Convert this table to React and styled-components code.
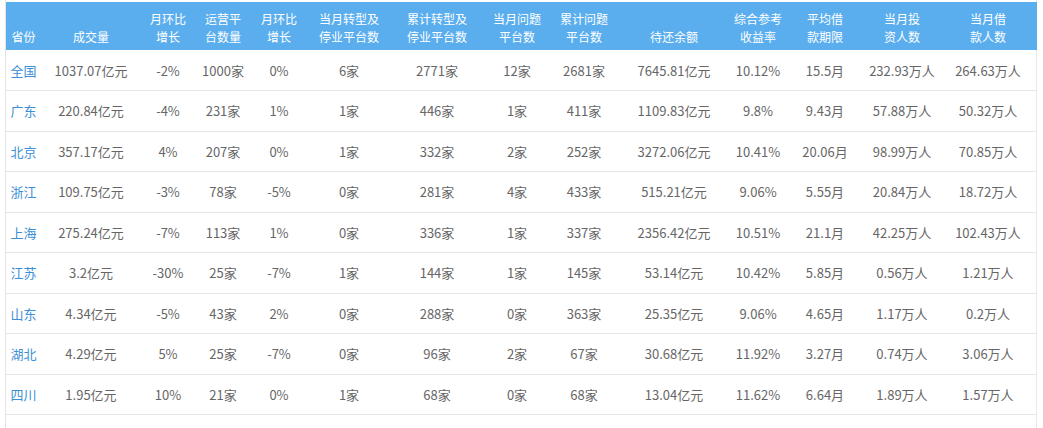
import React from 'react'
import styled, { createGlobalStyle } from 'styled-components'

// column widths, taken so that each column's text sits where the reference has it
const columns = [
    { key: 'prov', title: ['省份'], width: 35 },
    { key: 'volume', title: ['成交量'], width: 100 },
    { key: 'volRate', title: ['月环比', '增长'], width: 54 },
    { key: 'platforms', title: ['运营平', '台数量'], width: 56 },
    { key: 'platRate', title: ['月环比', '增长'], width: 56 },
    { key: 'monthStop', title: ['当月转型及', '停业平台数'], width: 84 },
    { key: 'totalStop', title: ['累计转型及', '停业平台数'], width: 92 },
    { key: 'monthProblem', title: ['当月问题', '平台数'], width: 68 },
    { key: 'totalProblem', title: ['累计问题', '平台数'], width: 66 },
    { key: 'balance', title: ['待还余额'], width: 114 },
    { key: 'yield', title: ['综合参考', '收益率'], width: 54 },
    { key: 'term', title: ['平均借', '款期限'], width: 80 },
    { key: 'investors', title: ['当月投', '资人数'], width: 74 },
    { key: 'borrowers', title: ['当月借', '款人数'], width: 98 },
]

const rows = [
    ['全国', '1037.07亿元', '-2%', '1000家', '0%', '6家', '2771家', '12家', '2681家', '7645.81亿元', '10.12%', '15.5月', '232.93万人', '264.63万人'],
    ['广东', '220.84亿元', '-4%', '231家', '1%', '1家', '446家', '1家', '411家', '1109.83亿元', '9.8%', '9.43月', '57.88万人', '50.32万人'],
    ['北京', '357.17亿元', '4%', '207家', '0%', '1家', '332家', '2家', '252家', '3272.06亿元', '10.41%', '20.06月', '98.99万人', '70.85万人'],
    ['浙江', '109.75亿元', '-3%', '78家', '-5%', '0家', '281家', '4家', '433家', '515.21亿元', '9.06%', '5.55月', '20.84万人', '18.72万人'],
    ['上海', '275.24亿元', '-7%', '113家', '1%', '0家', '336家', '1家', '337家', '2356.42亿元', '10.51%', '21.1月', '42.25万人', '102.43万人'],
    ['江苏', '3.2亿元', '-30%', '25家', '-7%', '1家', '144家', '1家', '145家', '53.14亿元', '10.42%', '5.85月', '0.56万人', '1.21万人'],
    ['山东', '4.34亿元', '-5%', '43家', '2%', '0家', '288家', '0家', '363家', '25.35亿元', '9.06%', '4.65月', '1.17万人', '0.2万人'],
    ['湖北', '4.29亿元', '5%', '25家', '-7%', '0家', '96家', '2家', '67家', '30.68亿元', '11.92%', '3.27月', '0.74万人', '3.06万人'],
    ['四川', '1.95亿元', '10%', '21家', '0%', '1家', '68家', '0家', '68家', '13.04亿元', '11.62%', '6.64月', '1.89万人', '1.57万人'],
]

function App() {
    return (
        <>
            <GlobalStyle />
            <Page>
                <Table>
                    <colgroup>
                        {columns.map(col => <col key={col.key} style={{ width: col.width }} />)}
                    </colgroup>
                    <thead>
                        <tr>
                            {columns.map(col => (
                                <HeadCell key={col.key}>
                                    {col.title.map(line => <span key={line}>{line}</span>)}
                                </HeadCell>
                            ))}
                        </tr>
                    </thead>
                    <tbody>
                        {rows.map(row => (
                            <Row key={row[0]}>
                                {row.map((value, i) => (
                                    <Cell key={columns[i].key} $link={i === 0}>{value}</Cell>
                                ))}
                            </Row>
                        ))}
                    </tbody>
                </Table>
            </Page>
        </>
    )
}

export default App

const GlobalStyle = createGlobalStyle`
    html, body {
        margin: 0;
        padding: 0;
        background: #fff;
    }
    body {
        font-family: "Noto Sans CJK SC", "Noto Sans", sans-serif;
    }
`

const Page = styled.div`
    width: 1032px;
    min-height: 428px;
    margin-left: 5px;
    padding-top: 2px;
    box-sizing: border-box;
    border-left: 1px solid #e4e4e4;
    border-right: 1px solid #e8e8e8;
`

const Table = styled.table`
    width: 1030px;
    table-layout: fixed;
    border-collapse: collapse;
    border-spacing: 0;
`

const HeadCell = styled.th`
    height: 48px;
    padding: 0 0 5px 0;
    box-sizing: border-box;
    background: #5aaeee;
    color: #fff;
    font-size: 12px;
    font-weight: 400;
    line-height: 17.5px;
    text-align: center;
    vertical-align: bottom;

    span {
        display: block;
    }
`

const Row = styled.tr`
    height: 40.5px;
    border-bottom: 1px solid #e6e6e6;
`

const Cell = styled.td`
    padding: 0;
    font-size: 13px;
    color: ${props => (props.$link ? '#3b8fd6' : '#666')};
    text-align: center;
    white-space: nowrap;
    vertical-align: middle;
`
